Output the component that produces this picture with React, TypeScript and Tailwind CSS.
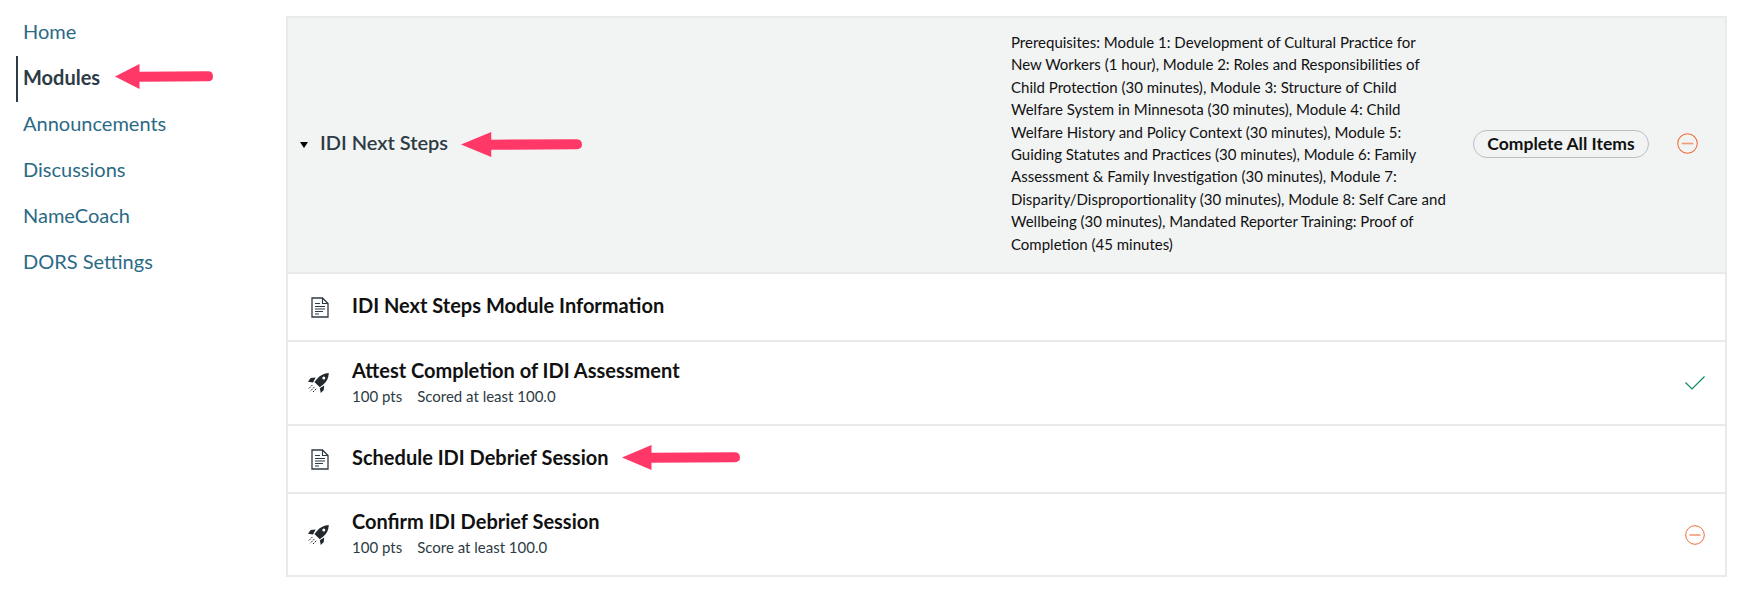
import React from 'react'

const navItems = ['Home', 'Modules', 'Announcements', 'Discussions', 'NameCoach', 'DORS Settings']

const prereqs =
  'Prerequisites: Module 1: Development of Cultural Practice for New Workers (1 hour), Module 2: Roles and Responsibilities of Child Protection (30 minutes), Module 3: Structure of Child Welfare System in Minnesota (30 minutes), Module 4: Child Welfare History and Policy Context (30 minutes), Module 5: Guiding Statutes and Practices (30 minutes), Module 6: Family Assessment & Family Investigation (30 minutes), Module 7: Disparity/Disproportionality (30 minutes), Module 8: Self Care and Wellbeing (30 minutes), Mandated Reporter Training: Proof of Completion (45 minutes)'

function PinkArrow({ className }: { className: string }) {
  return (
    <svg className={`absolute ${className}`} viewBox="0 0 100 26" preserveAspectRatio="none" fill="#ff3868">
      <path d="M0 13 L25 0 L25 8 L95 7.5 Q100 7.5 100 13 Q100 18 95 18 L25 18.5 L25 26 Z" />
    </svg>
  )
}

function DocIcon() {
  return (
    <svg width="18" height="21" viewBox="0 0 18 21" fill="none" stroke="#2d3b45">
      <path d="M1 1 H11.5 L17 6.5 V20 H1 Z" strokeWidth="1.3" />
      <path d="M11.5 1 V6.5 H17" strokeWidth="1.1" />
      <path d="M4 6.5 H9 M4 9.5 H14 M4 12 H14 M4 14.5 H12 M4 17 H8" strokeWidth="1.2" />
    </svg>
  )
}

function RocketIcon() {
  return (
    <svg width="21" height="20" viewBox="0 0 21 20" fill="#22292e" className="-ml-[3px]">
      <path d="M20.8 0 C16 0.4 12.2 2.2 9.4 5.4 L6.4 9 L11.8 14.2 L15.6 11.2 C18.8 8.6 20.6 5 20.8 0 Z M15.8 3.6 A1.5 1.5 0 1 1 15.8 6.6 A1.5 1.5 0 1 1 15.8 3.6 Z" fillRule="evenodd" />
      <path d="M7.6 4.4 L2.6 5 L0 8.8 L5 9.4 Z M16.2 12.4 L15.8 17 L12.8 20 L11.8 15.2 Z" />
      <path d="M4.4 12 L0.6 15.8 M6.4 14 L2 18.4 M8.2 15.8 L5 19" stroke="#22292e" strokeWidth="1" strokeDasharray="2 1" fill="none" />
    </svg>
  )
}

function MinusIcon({ size }: { size: number }) {
  return (
    <svg width={size} height={size} viewBox="0 0 20 20" fill="none" stroke="#ee6c3a">
      <circle cx="10" cy="10" r="9.3" strokeWidth="1" />
      <path d="M4.5 10 H15.5" strokeWidth="1.6" stroke="#f59a78" />
    </svg>
  )
}

function CheckIcon() {
  return (
    <svg width="20" height="14" viewBox="0 0 20 14" fill="none" stroke="#0b8a63" strokeWidth="1.2">
      <path d="M0.5 6.5 L7 13 L19.5 0.5" />
    </svg>
  )
}

function Row({ icon, title, meta, status, height }: {
  icon: React.ReactNode
  title: string
  meta?: string
  status?: React.ReactNode
  height: string
}) {
  return (
    <div className={`flex items-center border-t-2 border-[#e8eaec] pl-[23px] pr-[20px] ${height}`}>
      <div className="flex w-[41px] shrink-0">{icon}</div>
      <div className="flex-1 -translate-y-[2px]">
        <div className="text-[20px] font-bold leading-[28px] text-[#111]">{title}</div>
        {meta && (
          <div className="mt-px flex gap-[15px] text-[15px] leading-[22px] text-[#2d3b45]">
            <span>100 pts</span>
            <span>{meta}</span>
          </div>
        )}
      </div>
      {status}
    </div>
  )
}

export default function App() {
  return (
    <div className="relative flex h-[603px] w-[1750px] overflow-hidden bg-white font-['Lato','Noto_Sans',sans-serif]">
      <nav className="w-[286px] shrink-0 pl-4 pt-[10px]">
        {navItems.map((item) =>
          item === 'Modules' ? (
            <div key={item} className="flex h-[46px] items-center border-l-2 border-[#2d3b45] pb-1 pl-[5px] text-[20px] font-bold text-[#2d3b45]">
              {item}
            </div>
          ) : (
            <div key={item} className="flex h-[46px] items-center pb-1 pl-[7px] text-[20px] text-[#2b6a85]">
              {item}
            </div>
          )
        )}
      </nav>

      <main className="mt-4 flex h-[561px] w-[1441px] shrink-0 flex-col border-2 border-[#e8eaec]">
        <div className="flex h-[254px] shrink-0 items-center bg-[#f2f4f4] pl-3">
          <span className="h-0 w-0 border-x-4 border-t-[6px] border-x-transparent border-t-black" />
          <span className="ml-3 flex-1 -translate-y-[3px] text-[20px] font-semibold text-[#2d3b45]">IDI Next Steps</span>
          <p className="w-[437px] shrink-0 pb-1 text-[15px] leading-[22.4px] text-[#111]">{prereqs}</p>
          <button className="ml-[25px] h-[28px] w-[176px] shrink-0 -translate-y-px rounded-full border border-[#b8bfc4] pb-px text-center text-[17.5px] font-bold text-[#111]">
            Complete All Items
          </button>
          <div className="ml-[28px] mr-[27px] flex shrink-0 -translate-y-[2px]">
            <MinusIcon size={21} />
          </div>
        </div>
        <Row height="h-[68px]" icon={<DocIcon />} title="IDI Next Steps Module Information" />
        <Row height="h-[84px]" icon={<RocketIcon />} title="Attest Completion of IDI Assessment" meta="Scored at least 100.0" status={<CheckIcon />} />
        <Row height="h-[68px]" icon={<DocIcon />} title="Schedule IDI Debrief Session" />
        <Row height="h-[83px]" icon={<RocketIcon />} title="Confirm IDI Debrief Session" meta="Score at least 100.0" status={<MinusIcon size={20} />} />
      </main>

      <PinkArrow className="left-[115px] top-[64px] h-[25px] w-[98px]" />
      <PinkArrow className="left-[461px] top-[132px] h-[25px] w-[121px]" />
      <PinkArrow className="left-[622px] top-[445px] h-[25px] w-[118px]" />
    </div>
  )
}
